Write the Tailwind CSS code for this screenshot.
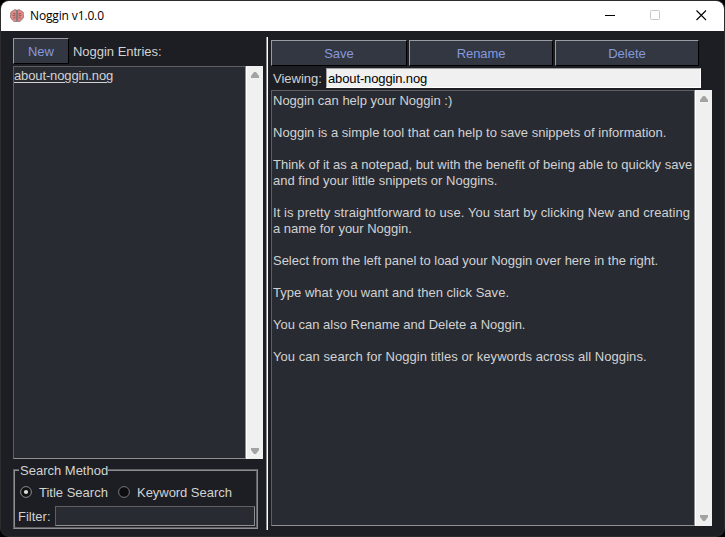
<!DOCTYPE html>
<html lang="en">
<head>
<meta charset="utf-8">
<title>Noggin v1.0.0</title>
<script src="https://cdn.jsdelivr.net/npm/@tailwindcss/browser@4"></script>
</head>
<body class="bg-black overflow-hidden">
<div class="w-[725px] h-[537px] rounded-[9px] border border-[#2c2c2f] bg-[#1c1e23] overflow-hidden flex flex-col font-['Liberation_Sans',Arial,sans-serif] text-[13px] leading-4 text-[#d2d2d2]">
  <header class="h-[30px] shrink-0 bg-white flex items-center text-black">
    <svg class="ml-[9px] -mt-px w-[14px] h-[14px]" viewBox="0 0 14 14" fill="none">
      <path d="M6.500 1C4.800.2 3.500 1 3 2 1 2.300.3 4 .6 5.500-.3 7.500.4 9.500 2 10c.5 2 2.800 3 4.500 2.300z" fill="#e58583" stroke="#94807f"/>
      <path d="M7.500 1C9.200.2 10.500 1 11 2c2 .3 2.700 2 2.400 3.500.9 2 .2 4-1.400 4.500-.5 2-2.800 3-4.500 2.300z" fill="#e58583" stroke="#94807f"/>
      <path d="M3 4.500h2v2H2.500M3 9h2V7.500M11 4.500H9v2h2.500M11 9H9V7.500" stroke="#9b6464"/>
      <path d="M7 1v12" stroke="#777"/>
    </svg>
    <h1 class="ml-[6px] font-['Open_Sans','Noto_Sans',sans-serif] text-[12px] tracking-[-0.14px]">Noggin v1.0.0</h1>
    <div class="ml-auto mr-[17px] -mt-px flex items-center gap-[35px]">
      <svg class="w-[11px] h-[11px]" viewBox="0 0 11 11"><path d="M1 5.500h10" stroke="#000"/></svg>
      <svg class="w-[11px] h-[11px]" viewBox="0 0 11 11"><rect x=".5" y=".5" width="9" height="9" rx=".8" fill="none" stroke="#c8c8c8"/></svg>
      <svg class="w-[11px] h-[11px]" viewBox="0 0 11 11"><path d="M.5.5l9.500 9.500M10 .5L.5 10" stroke="#000" stroke-width="1.100"/></svg>
    </div>
  </header>
  <main class="flex flex-1 min-h-0 pl-3">
    <section class="w-[250px] shrink-0 pt-[7px]">
      <div class="flex items-center h-[26px]">
        <button class="w-14 h-[26px] bg-[#333741] text-[#8599dd] border border-t-[#999ba0] border-l-[#999ba0] border-b-black border-r-black pt-px">New</button>
        <span class="ml-1 pt-px tracking-[-0.02px]">Noggin Entries:</span>
      </div>
      <div class="mt-[2px] h-[393px] flex">
        <div class="flex-1 min-w-0 bg-[#282b32] border border-t-[#5e5f63] border-l-[#5e5f63] border-b-[#8e8e91] border-r-[#8e8e91] pt-px">
          <span class="underline underline-offset-2 tracking-[-0.13px]">about-noggin.nog</span>
        </div>
        <div class="w-[17px] shrink-0 bg-[#f0f0f0] border-l border-white flex flex-col justify-between items-center py-[5px]">
          <svg class="w-2 h-[7px]" viewBox="0 0 8 7"><path d="M3 1h2l3 4v2H0V5z" fill="#a3a3a3"/></svg>
          <svg class="w-2 h-[7px]" viewBox="0 0 8 7"><path d="M0 1h8v2L5 7H3L0 3z" fill="#a3a3a3"/></svg>
        </div>
      </div>
      <div role="group" class="relative mt-[10px] w-[245px] h-[60px] border border-t-[#5e5f63] border-l-[#5e5f63] border-b-[#8e8e91] border-r-[#8e8e91]">
        <div class="h-full border border-t-[#8e8e91] border-l-[#8e8e91] border-b-[#5e5f63] border-r-[#5e5f63] pt-[13px] px-[3px]">
          <span class="absolute left-[5px] -top-[7px] bg-[#1c1e23] pl-px h-4 whitespace-nowrap">Search Method</span>
          <div class="flex items-center h-4">
            <svg class="ml-[2px] w-3 h-3" viewBox="0 0 12 12"><circle cx="6" cy="6" r="5.400" fill="#111" stroke="#8b8b8e"/><circle cx="6" cy="6" r="2.100" fill="#ddd"/></svg>
            <span class="ml-[7px] w-[79px] pt-[2px] whitespace-nowrap">Title Search</span>
            <svg class="w-3 h-3" viewBox="0 0 12 12"><circle cx="6" cy="6" r="5.400" fill="#0d0d0f" stroke="#77777a"/></svg>
            <span class="ml-[7px] pt-[2px] whitespace-nowrap tracking-[-0.04px]">Keyword Search</span>
          </div>
          <div class="mt-[6px] flex items-center h-5">
            <label class="w-[37px] shrink-0 pt-px">Filter:</label>
            <div class="w-[200px] h-5 shrink-0 bg-[#282b32] border border-t-[#5e5f63] border-l-[#5e5f63] border-b-[#8e8e91] border-r-[#8e8e91]"></div>
          </div>
        </div>
      </div>
    </section>
    <div class="ml-[3px] mt-[6px] h-[493px] w-[2px] shrink-0 bg-white border-l border-[#8e8e91]"></div>
    <section class="ml-[3px] w-[441px] shrink-0 pt-[9px]">
      <div class="flex gap-[2px] h-[26px]">
        <button class="w-[136px] bg-[#333741] text-[#8599dd] border border-t-[#999ba0] border-l-[#999ba0] border-b-black border-r-black pt-px">Save</button>
        <button class="w-[144px] bg-[#333741] text-[#8599dd] border border-t-[#999ba0] border-l-[#999ba0] border-b-black border-r-black pt-px tracking-[-0.1px]">Rename</button>
        <button class="w-[144px] bg-[#333741] text-[#8599dd] border border-t-[#999ba0] border-l-[#999ba0] border-b-black border-r-black pt-px">Delete</button>
      </div>
      <div class="mt-[2px] h-5 flex items-center">
        <span class="w-[55px] pl-[2px] pt-px shrink-0">Viewing:</span>
        <div class="w-[375px] h-5 bg-[#f0f0f0] text-black border border-t-[#a0a0a0] border-l-[#a0a0a0] border-b-white border-r-white pl-px pt-[2px] tracking-[-0.13px]">about-noggin.nog</div>
      </div>
      <div class="mt-[2px] h-[436px] flex">
        <div class="flex-1 min-w-0 bg-[#282b32] border border-t-[#5e5f63] border-l-[#5e5f63] border-b-[#8e8e91] border-r-[#8e8e91] pl-px pt-[2px] whitespace-pre"><p>Noggin can help your Noggin :)</p><p class="mt-4 tracking-[0.015px]">Noggin is a simple tool that can help to save snippets of information.</p><p class="mt-4 tracking-[0.01px]">Think of it as a notepad, but with the benefit of being able to quickly save
and find your little snippets or Noggins.</p><p class="mt-4 tracking-[0.08px]">It is pretty straightforward to use. You start by clicking New and creating</p><p class="tracking-[-0.03px]">a name for your Noggin.</p><p class="mt-4 tracking-[-0.02px]">Select from the left panel to load your Noggin over here in the right.</p><p class="mt-4 tracking-[0.03px]">Type what you want and then click Save.</p><p class="mt-4">You can also Rename and Delete a Noggin.</p><p class="mt-4 tracking-[0.053px]">You can search for Noggin titles or keywords across all Noggins.</p></div>
        <div class="w-[17px] shrink-0 bg-[#f0f0f0] border-l border-white flex flex-col justify-between items-center py-[5px]">
          <svg class="w-2 h-[7px]" viewBox="0 0 8 7"><path d="M3 1h2l3 4v2H0V5z" fill="#a3a3a3"/></svg>
          <svg class="w-2 h-[7px]" viewBox="0 0 8 7"><path d="M0 1h8v2L5 7H3L0 3z" fill="#a3a3a3"/></svg>
        </div>
      </div>
    </section>
  </main>
</div>
</body>
</html>
